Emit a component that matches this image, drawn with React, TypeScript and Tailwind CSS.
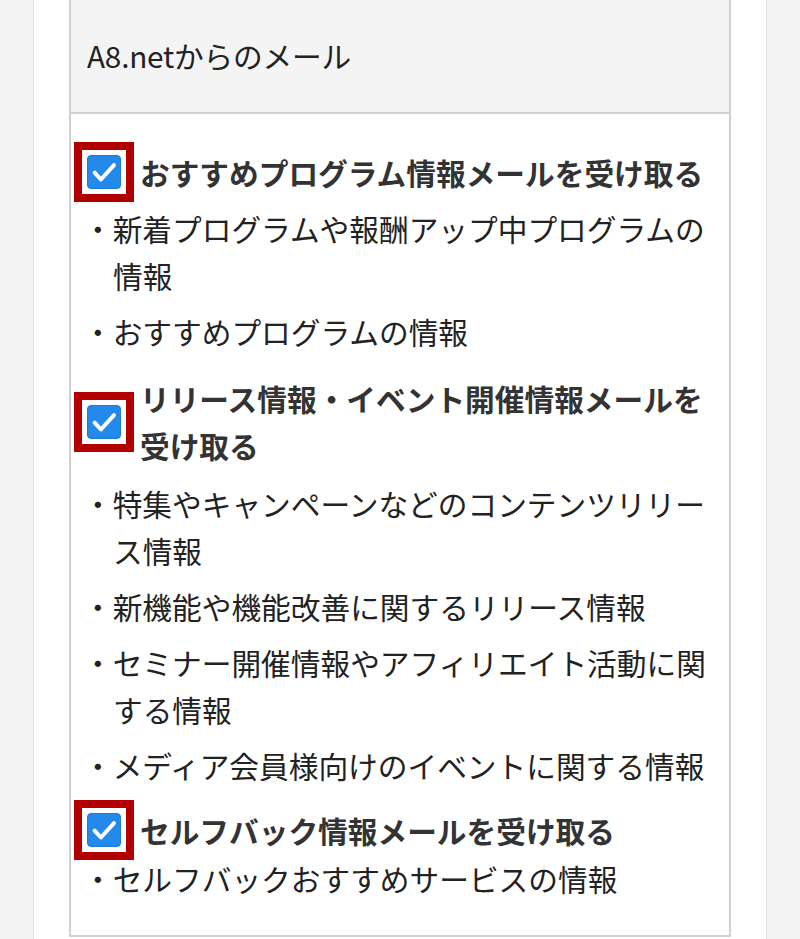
const sections = [
  {
    title: "おすすめプログラム情報メールを受け取る",
    wrap: "mt-[28px]",
    list: "mt-[3px]",
    items: ["新着プログラムや報酬アップ中プログラムの情報", "おすすめプログラムの情報"],
  },
  {
    title: "リリース情報・イベント開催情報メールを受け取る",
    wrap: "mt-[20px]",
    list: "mt-[11px]",
    items: [
      "特集やキャンペーンなどのコンテンツリリース情報",
      "新機能や機能改善に関するリリース情報",
      "セミナー開催情報やアフィリエイト活動に関する情報",
      "メディア会員様向けのイベントに関する情報",
    ],
  },
  {
    title: "セルフバック情報メールを受け取る",
    wrap: "mt-[11px]",
    list: "-mt-[5px]",
    items: ["セルフバックおすすめサービスの情報"],
  },
];

function Checked() {
  return (
    <span className="shrink-0 w-[60px] h-[60px] border-[8px] border-[#b20000] bg-white flex items-center justify-center">
      <span className="w-[34px] h-[34px] rounded-[4px] bg-[#2389ea] border border-[#1b7bd8] flex items-center justify-center">
        <svg viewBox="0 0 24 24" className="w-[30px] h-[30px]" fill="none" stroke="white" strokeWidth="3.2" strokeLinecap="round" strokeLinejoin="round">
          <path d="M4.5 12.5l5 5.5L20 6.5" />
        </svg>
      </span>
    </span>
  );
}

export default function App() {
  return (
    <div className="w-[800px] h-[939px] overflow-hidden bg-[#f3f3f3] font-['Noto_Sans_CJK_JP','Noto_Sans',sans-serif] text-[29.7px]">
      <div className="ml-[33px] w-[734px] h-full bg-white border-x border-[#e4e4e4] px-[35px]">
        <div className="border-x-2 border-b-2 border-[#d2d2d2]">
          <div className="h-[114px] bg-[#f4f4f4] border-b-2 border-[#d2d2d2] flex items-center pl-[16px] text-[#222] tracking-[-0.2px]">
            A8.netからのメール
          </div>
          <div className="pl-[3px] pr-[8px] pb-[33px]">
            {sections.map((s, i) => (
              <div key={i} className={s.wrap}>
                <label className="flex items-center gap-[6px]">
                  <Checked />
                  <span className="font-bold text-[#333] leading-[47px]">{s.title}</span>
                </label>
                <ul className={`${s.list} pl-[9px] flex flex-col gap-[9px] text-[#222] leading-[47px]`}>
                  {s.items.map((t, j) => (
                    <li key={j} className="pl-[30px] -indent-[30px]">
                      ・{t}
                    </li>
                  ))}
                </ul>
              </div>
            ))}
          </div>
        </div>
      </div>
    </div>
  );
}
